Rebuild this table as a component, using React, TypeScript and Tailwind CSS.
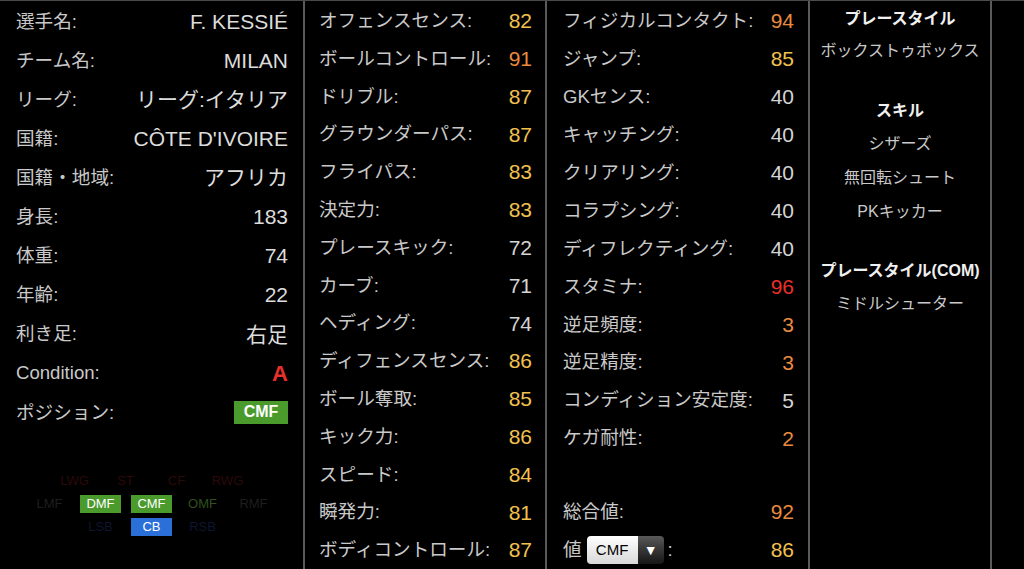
import React from "react";

const Y = "text-[#f1c04f]";
const O = "text-[#ea8a3e]";
const R = "text-[#e8302c]";
const W = "text-[#d4d4d4]";

type Stat = { l: string; v: string; c: string };

const col2: Stat[] = [
  { l: "オフェンスセンス:", v: "82", c: Y },
  { l: "ボールコントロール:", v: "91", c: O },
  { l: "ドリブル:", v: "87", c: Y },
  { l: "グラウンダーパス:", v: "87", c: Y },
  { l: "フライパス:", v: "83", c: Y },
  { l: "決定力:", v: "83", c: Y },
  { l: "プレースキック:", v: "72", c: W },
  { l: "カーブ:", v: "71", c: W },
  { l: "ヘディング:", v: "74", c: W },
  { l: "ディフェンスセンス:", v: "86", c: Y },
  { l: "ボール奪取:", v: "85", c: Y },
  { l: "キック力:", v: "86", c: Y },
  { l: "スピード:", v: "84", c: Y },
  { l: "瞬発力:", v: "81", c: Y },
  { l: "ボディコントロール:", v: "87", c: Y },
];

const col3: Stat[] = [
  { l: "フィジカルコンタクト:", v: "94", c: O },
  { l: "ジャンプ:", v: "85", c: Y },
  { l: "GKセンス:", v: "40", c: W },
  { l: "キャッチング:", v: "40", c: W },
  { l: "クリアリング:", v: "40", c: W },
  { l: "コラプシング:", v: "40", c: W },
  { l: "ディフレクティング:", v: "40", c: W },
  { l: "スタミナ:", v: "96", c: R },
  { l: "逆足頻度:", v: "3", c: O },
  { l: "逆足精度:", v: "3", c: O },
  { l: "コンディション安定度:", v: "5", c: W },
  { l: "ケガ耐性:", v: "2", c: O },
];

const info: [string, string][] = [
  ["選手名:", "F. KESSIÉ"],
  ["チーム名:", "MILAN"],
  ["リーグ:", "リーグ:イタリア"],
  ["国籍:", "CÔTE D'IVOIRE"],
  ["国籍・地域:", "アフリカ"],
  ["身長:", "183"],
  ["体重:", "74"],
  ["年齢:", "22"],
  ["利き足:", "右足"],
];

function StatRow({ s }: { s: Stat }) {
  return (
    <div className="flex h-[38px] items-center justify-between">
      <span className="text-[18.6px] text-[#c9c9c9]">{s.l}</span>
      <span className={`text-[21px] ${s.c}`}>{s.v}</span>
    </div>
  );
}

function Cell({ t, kind }: { t: string; kind: "red" | "grey" | "green" | "blue" | "G" | "B" }) {
  if (kind === "G" || kind === "B") {
    return (
      <div className="flex w-[51px] justify-center">
        <div
          className={`flex h-[18px] w-[41px] items-center justify-center text-[13px] text-white ${
            kind === "G" ? "bg-[#4a9a2c]" : "bg-[#2b6fd9]"
          }`}
        >
          {t}
        </div>
      </div>
    );
  }
  const c =
    kind === "red"
      ? "text-[#2c0909]"
      : kind === "grey"
      ? "text-[#1e1e1e]"
      : kind === "green"
      ? "text-[#31501d]"
      : "text-[#0d1530]";
  return <div className={`flex w-[51px] justify-center text-[13px] ${c}`}>{t}</div>;
}

export default function App() {
  return (
    <div className="flex h-[569px] w-[1024px] overflow-hidden border-t border-[#4a4a4a] bg-black font-['Liberation_Sans','Noto_Sans_CJK_JP',sans-serif]">
      {/* Column 1 */}
      <div className="flex w-[305px] shrink-0 flex-col border-r-2 border-[#5a5a5a] pt-[1px] pl-[16px] pr-[15px]">
        {info.map(([l, v]) => (
          <div key={l} className="flex h-[39.1px] items-center justify-between">
            <span className="text-[18.6px] text-[#c9c9c9]">{l}</span>
            <span className="text-[21px] text-[#dcdcdc]">{v}</span>
          </div>
        ))}
        <div className="flex h-[39.1px] items-center justify-between">
          <span className="text-[18.6px] text-[#c9c9c9]">Condition:</span>
          <span className="text-[22px] font-bold text-[#e8302c]">A</span>
        </div>
        <div className="flex h-[39.1px] items-center justify-between">
          <span className="text-[18.6px] text-[#c9c9c9]">ポジション:</span>
          <span className="flex h-[23px] w-[54px] items-center justify-center bg-[#4a9a2c] text-[16px] font-bold text-white">
            CMF
          </span>
        </div>
        <div className="mt-[38px] ml-[8px] flex flex-col gap-[1px]">
          <div className="flex h-[22px] items-center pl-[25px]">
            <Cell t="LWG" kind="red" />
            <Cell t="ST" kind="red" />
            <Cell t="CF" kind="red" />
            <Cell t="RWG" kind="red" />
          </div>
          <div className="flex h-[22px] items-center">
            <Cell t="LMF" kind="grey" />
            <Cell t="DMF" kind="G" />
            <Cell t="CMF" kind="G" />
            <Cell t="OMF" kind="green" />
            <Cell t="RMF" kind="grey" />
          </div>
          <div className="flex h-[22px] items-center pl-[51px]">
            <Cell t="LSB" kind="blue" />
            <Cell t="CB" kind="B" />
            <Cell t="RSB" kind="blue" />
          </div>
        </div>
      </div>

      {/* Column 2 */}
      <div className="flex w-[242px] shrink-0 flex-col border-r-2 border-[#5a5a5a] pt-[1px] pl-[14px] pr-[13px]">
        {col2.map((s) => (
          <StatRow key={s.l} s={s} />
        ))}
      </div>

      {/* Column 3 */}
      <div className="flex w-[263px] shrink-0 flex-col border-r-2 border-[#5a5a5a] pt-[1px] pl-[16px] pr-[14px]">
        {col3.map((s) => (
          <StatRow key={s.l} s={s} />
        ))}
        <div className="h-[36px]" />
        <div className="flex h-[38px] items-center justify-between">
          <span className="text-[18.6px] text-[#c9c9c9]">総合値:</span>
          <span className={`text-[21px] ${O}`}>92</span>
        </div>
        <div className="flex h-[38px] items-center justify-between">
          <div className="flex items-center">
            <span className="text-[18.6px] text-[#c9c9c9]">値</span>
            <div className="ml-[5px] flex h-[28px] overflow-hidden rounded-[4px]">
              <div className="flex w-[51px] items-center justify-center bg-gradient-to-b from-white to-[#d8d8d8] text-[15px] text-black">
                CMF
              </div>
              <div className="flex w-[26px] items-center justify-center bg-gradient-to-b from-[#5a5a5a] to-[#161616] text-[14px] text-white">
                ▼
              </div>
            </div>
            <span className="ml-[4px] text-[18.6px] text-[#c9c9c9]">:</span>
          </div>
          <span className={`text-[21px] ${Y}`}>86</span>
        </div>
      </div>

      {/* Column 4 */}
      <div className="flex w-[182px] shrink-0 flex-col items-center border-r-2 border-[#5a5a5a] pt-[2px] text-[16px]">
        <div className="flex h-[32px] items-center font-bold text-[#f0f0f0]">プレースタイル</div>
        <div className="flex h-[32px] items-center text-[#c9c9c9]">ボックストゥボックス</div>
        <div className="mt-[28px] flex h-[32px] items-center font-bold text-[#f0f0f0]">スキル</div>
        <div className="flex h-[34px] items-center text-[#c9c9c9]">シザーズ</div>
        <div className="flex h-[34px] items-center text-[#c9c9c9]">無回転シュート</div>
        <div className="flex h-[34px] items-center text-[#c9c9c9]">PKキッカー</div>
        <div className="mt-[26px] flex h-[32px] items-center font-bold text-[#f0f0f0]">プレースタイル(COM)</div>
        <div className="flex h-[34px] items-center text-[#c9c9c9]">ミドルシューター</div>
      </div>

      <div className="flex-1" />
    </div>
  );
}
